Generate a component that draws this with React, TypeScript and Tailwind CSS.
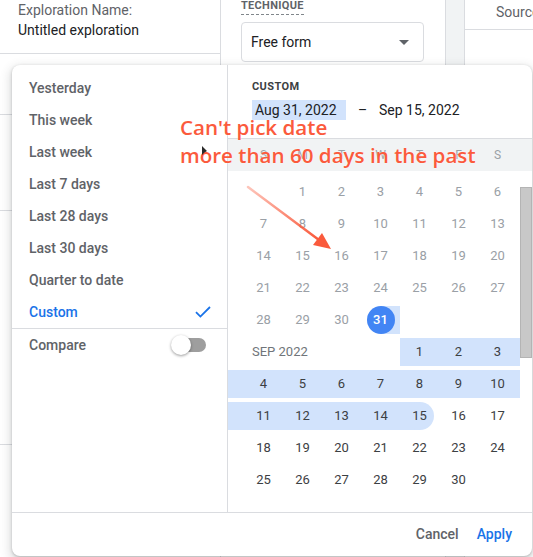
import React from 'react';

const presets = ['Yesterday', 'This week', 'Last week', 'Last 7 days', 'Last 28 days', 'Last 30 days', 'Quarter to date'];

type CellProps = {
  d?: number | null;
  tone?: 'off' | 'norm';
  hl?: 'none' | 'full' | 'right' | 'left';
  cap?: 'dark' | 'light';
};

const Cell: React.FC<CellProps> = ({ d, tone = 'norm', hl = 'none', cap }) => {
  const bg = {
    none: '',
    full: 'bg-[#d2e3fc]',
    right: 'bg-[linear-gradient(to_right,transparent_50%,#d2e3fc_50%)]',
    left: 'bg-[linear-gradient(to_right,#d2e3fc_50%,transparent_50%)]',
  }[hl];
  const color = tone === 'off' ? 'text-[#9aa0a6]' : 'text-[#3c4043]';
  return (
    <div className="w-[39px] h-[32px] flex items-center">
      <div className={`w-full h-[28px] flex items-center justify-center ${bg}`}>
        {cap ? (
          <span
            className={`w-[28px] h-[28px] rounded-full flex items-center justify-center ${
              cap === 'dark' ? 'bg-[#4285f4] text-white font-medium' : `bg-[#d2e3fc] ${color}`
            }`}
          >
            {d}
          </span>
        ) : (
          <span className={color}>{d}</span>
        )}
      </div>
    </div>
  );
};

const Pad: React.FC<{ on?: boolean; w: string }> = ({ on, w }) => (
  <div className={`${w} h-[32px] flex items-center`}>
    <div className={`w-full h-[28px] ${on ? 'bg-[#d2e3fc]' : ''}`} />
  </div>
);

const Row: React.FC<{ cells: CellProps[]; l?: boolean; r?: boolean }> = ({ cells, l, r }) => (
  <div className="flex text-[13px]">
    <Pad w="w-[16px]" on={l} />
    {cells.map((c, i) => (
      <Cell key={i} {...c} />
    ))}
    <Pad w="w-[3px]" on={r} />
  </div>
);

const range = (a: number, b: number) => Array.from({ length: b - a + 1 }, (_, i) => a + i);

const augRows: CellProps[][] = [
  [{ d: null }, ...range(1, 6).map((d) => ({ d, tone: 'off' as const }))],
  range(7, 13).map((d) => ({ d, tone: 'off' as const })),
  range(14, 20).map((d) => ({ d, tone: 'off' as const })),
  range(21, 27).map((d) => ({ d, tone: 'off' as const })),
  [
    ...range(28, 30).map((d) => ({ d, tone: 'off' as const })),
    { d: 31, hl: 'right', cap: 'dark' },
    { d: null },
    { d: null },
    { d: null },
  ],
];

const Check = () => (
  <svg width="16" height="12" viewBox="0 0 16 12" fill="none">
    <path d="M1 6.2 L5.4 10.6 L15 1" stroke="#1a73e8" strokeWidth="1.8" />
  </svg>
);

export default function App() {
  return (
    <div className="relative w-[533px] h-[557px] overflow-hidden bg-white font-['Roboto',sans-serif]">
      {/* page behind the popup */}
      <div className="flex h-full">
        <div className="w-[221px] shrink-0 border-r border-[#dadce0] flex flex-col">
          <div className="h-[54px] border-b border-[#dadce0] pl-[18px] text-[14px] leading-[20px]">
            <div className="text-[#5f6368]">Exploration Name:</div>
            <div className="text-[#202124]">Untitled exploration</div>
          </div>
          <div className="h-[61px] border-b border-[#dadce0]" />
          <div className="h-[96px] border-b border-[#dadce0]" />
          <div className="h-[234px] border-b border-[#dadce0]" />
        </div>
        <div className="w-[225px] shrink-0 border-r border-[#dadce0] pl-[20px]">
          <div className="flex">
            <div className="h-[15px] text-[11px] leading-[11px] font-bold tracking-[0.3px] text-[#5f6368] border-b border-dashed border-[#80868b]">
              TECHNIQUE
            </div>
          </div>
          <div className="mt-[7px] w-[183px] h-[40px] border border-[#dadce0] rounded-[4px] flex items-center justify-between pl-[9px] pr-[14px] text-[14px] text-[#202124]">
            <span>Free form</span>
            <svg width="10" height="5" viewBox="0 0 10 5">
              <polygon points="0,0 10,0 5,5" fill="#5f6368" />
            </svg>
          </div>
        </div>
        <div className="w-[19px] shrink-0 bg-[#f1f3f4] border-r border-[#dadce0]" />
        <div className="flex-1 min-w-0">
          <div className="h-[30px] border-b border-[#dadce0] pl-[31px] pt-[2px] text-[14px] leading-[20px] text-[#5f6368] whitespace-nowrap">
            Source
          </div>
        </div>
      </div>

      {/* date range popup */}
      <div className="absolute left-[12px] top-[65px] w-[520px] h-[491px] rounded-[8px] bg-white shadow-[0_1px_3px_rgba(60,64,67,0.3),0_4px_10px_3px_rgba(60,64,67,0.15)] flex flex-col overflow-hidden">
        <div className="flex h-[447px]">
          <div className="w-[216px] border-r border-[#dadce0] pt-[7px] text-[14px] font-medium">
            {presets.map((p) => (
              <div key={p} className="h-[32px] flex items-center pl-[17px] text-[#5f6368]">
                {p}
              </div>
            ))}
            <div className="h-[32px] flex items-center justify-between pl-[17px] pr-[16px] text-[#1a73e8] border-b border-[#dadce0] box-content">
              <span>Custom</span>
              <Check />
            </div>
            <div className="h-[32px] flex items-center justify-between pl-[17px] pr-[21px] text-[#5f6368]">
              <span>Compare</span>
              <div className="relative w-[35px] h-[20px] flex items-center">
                <div className="ml-[6px] w-[29px] h-[14px] rounded-full bg-[#9e9e9e]" />
                <div className="absolute left-0 top-0 w-[20px] h-[20px] rounded-full bg-white shadow-[0_1px_3px_rgba(0,0,0,0.4)]" />
              </div>
            </div>
          </div>

          <div className="flex-1 flex flex-col">
            <div className="pl-[24px] pt-[14px] pb-[18px]">
              <div className="text-[11px] leading-[16px] font-bold tracking-[0.4px] text-[#3c4043]">CUSTOM</div>
              <div className="mt-[5px] h-[20px] flex items-center text-[14px] text-[#202124]">
                <span className="w-[94px] h-[20px] bg-[#d2e3fc] pl-[3px] leading-[20px]">Aug 31, 2022</span>
                <span className="w-[33px] text-center">–</span>
                <span>Sep 15, 2022</span>
              </div>
            </div>
            <div className="border-t border-[#dadce0] h-[33px] bg-[#f1f3f4] flex pl-[16px] text-[12px] text-[#9aa0a6]">
              {['S', 'M', 'T', 'W', 'T', 'F', 'S'].map((w, i) => (
                <div key={i} className="w-[39px] flex items-center justify-center">
                  {w}
                </div>
              ))}
            </div>
            <div className="flex flex-1">
              <div className="w-[292px] pt-[5px]">
                {augRows.map((r, i) => (
                  <Row key={i} cells={r} />
                ))}
                <div className="flex text-[13px]">
                  <Pad w="w-[16px]" />
                  <div className="w-[156px] h-[32px] flex items-center pl-[8px] text-[#70757a]">SEP 2022</div>
                  {range(1, 3).map((d) => (
                    <Cell key={d} d={d} hl="full" />
                  ))}
                  <Pad w="w-[3px]" on />
                </div>
                <Row cells={range(4, 10).map((d) => ({ d, hl: 'full' as const }))} l r />
                <Row
                  cells={[
                    ...range(11, 14).map((d) => ({ d, hl: 'full' as const })),
                    { d: 15, hl: 'left', cap: 'light' },
                    { d: 16 },
                    { d: 17 },
                  ]}
                  l
                />
                <Row cells={range(18, 24).map((d) => ({ d }))} />
                <Row cells={[...range(25, 30).map((d) => ({ d })), { d: null }]} />
              </div>
              <div className="flex-1">
                <div className="mt-[16px] h-[171px] bg-[#c8c8c8] border border-[#b4b4b4]" />
              </div>
            </div>
          </div>
        </div>
        <div className="border-t border-[#dadce0] h-[44px] flex items-center justify-end gap-[18px] pr-[20px] text-[14px] font-medium">
          <span className="text-[#5f6368]">Cancel</span>
          <span className="text-[#1a73e8]">Apply</span>
        </div>
      </div>

      {/* annotation */}
      <div className="absolute left-[180px] top-[113px] text-[20.6px] leading-[28px] font-semibold text-[#fb5a3c] font-['Open_Sans',sans-serif] whitespace-nowrap [text-shadow:0_0_2px_rgba(255,255,255,0.8)]">
        Can't pick date
        <br />
        more than 60 days in the past
      </div>
      <svg className="absolute left-0 top-0 pointer-events-none" width="533" height="557">
        <defs>
          <linearGradient id="arr" x1="248" y1="187" x2="318" y2="239" gradientUnits="userSpaceOnUse">
            <stop offset="0" stopColor="#fa5a3c" stopOpacity="0.35" />
            <stop offset="1" stopColor="#fa5a3c" />
          </linearGradient>
        </defs>
        <line x1="248" y1="187" x2="319" y2="240" stroke="url(#arr)" strokeWidth="2.5" strokeLinecap="round" />
        <polygon points="331,249 313,245 322,233" fill="#fa5a3c" />
        <polygon points="202,146 202,155 204.5,152.5 207,151" fill="#2a2a2a" />
      </svg>
    </div>
  );
}
